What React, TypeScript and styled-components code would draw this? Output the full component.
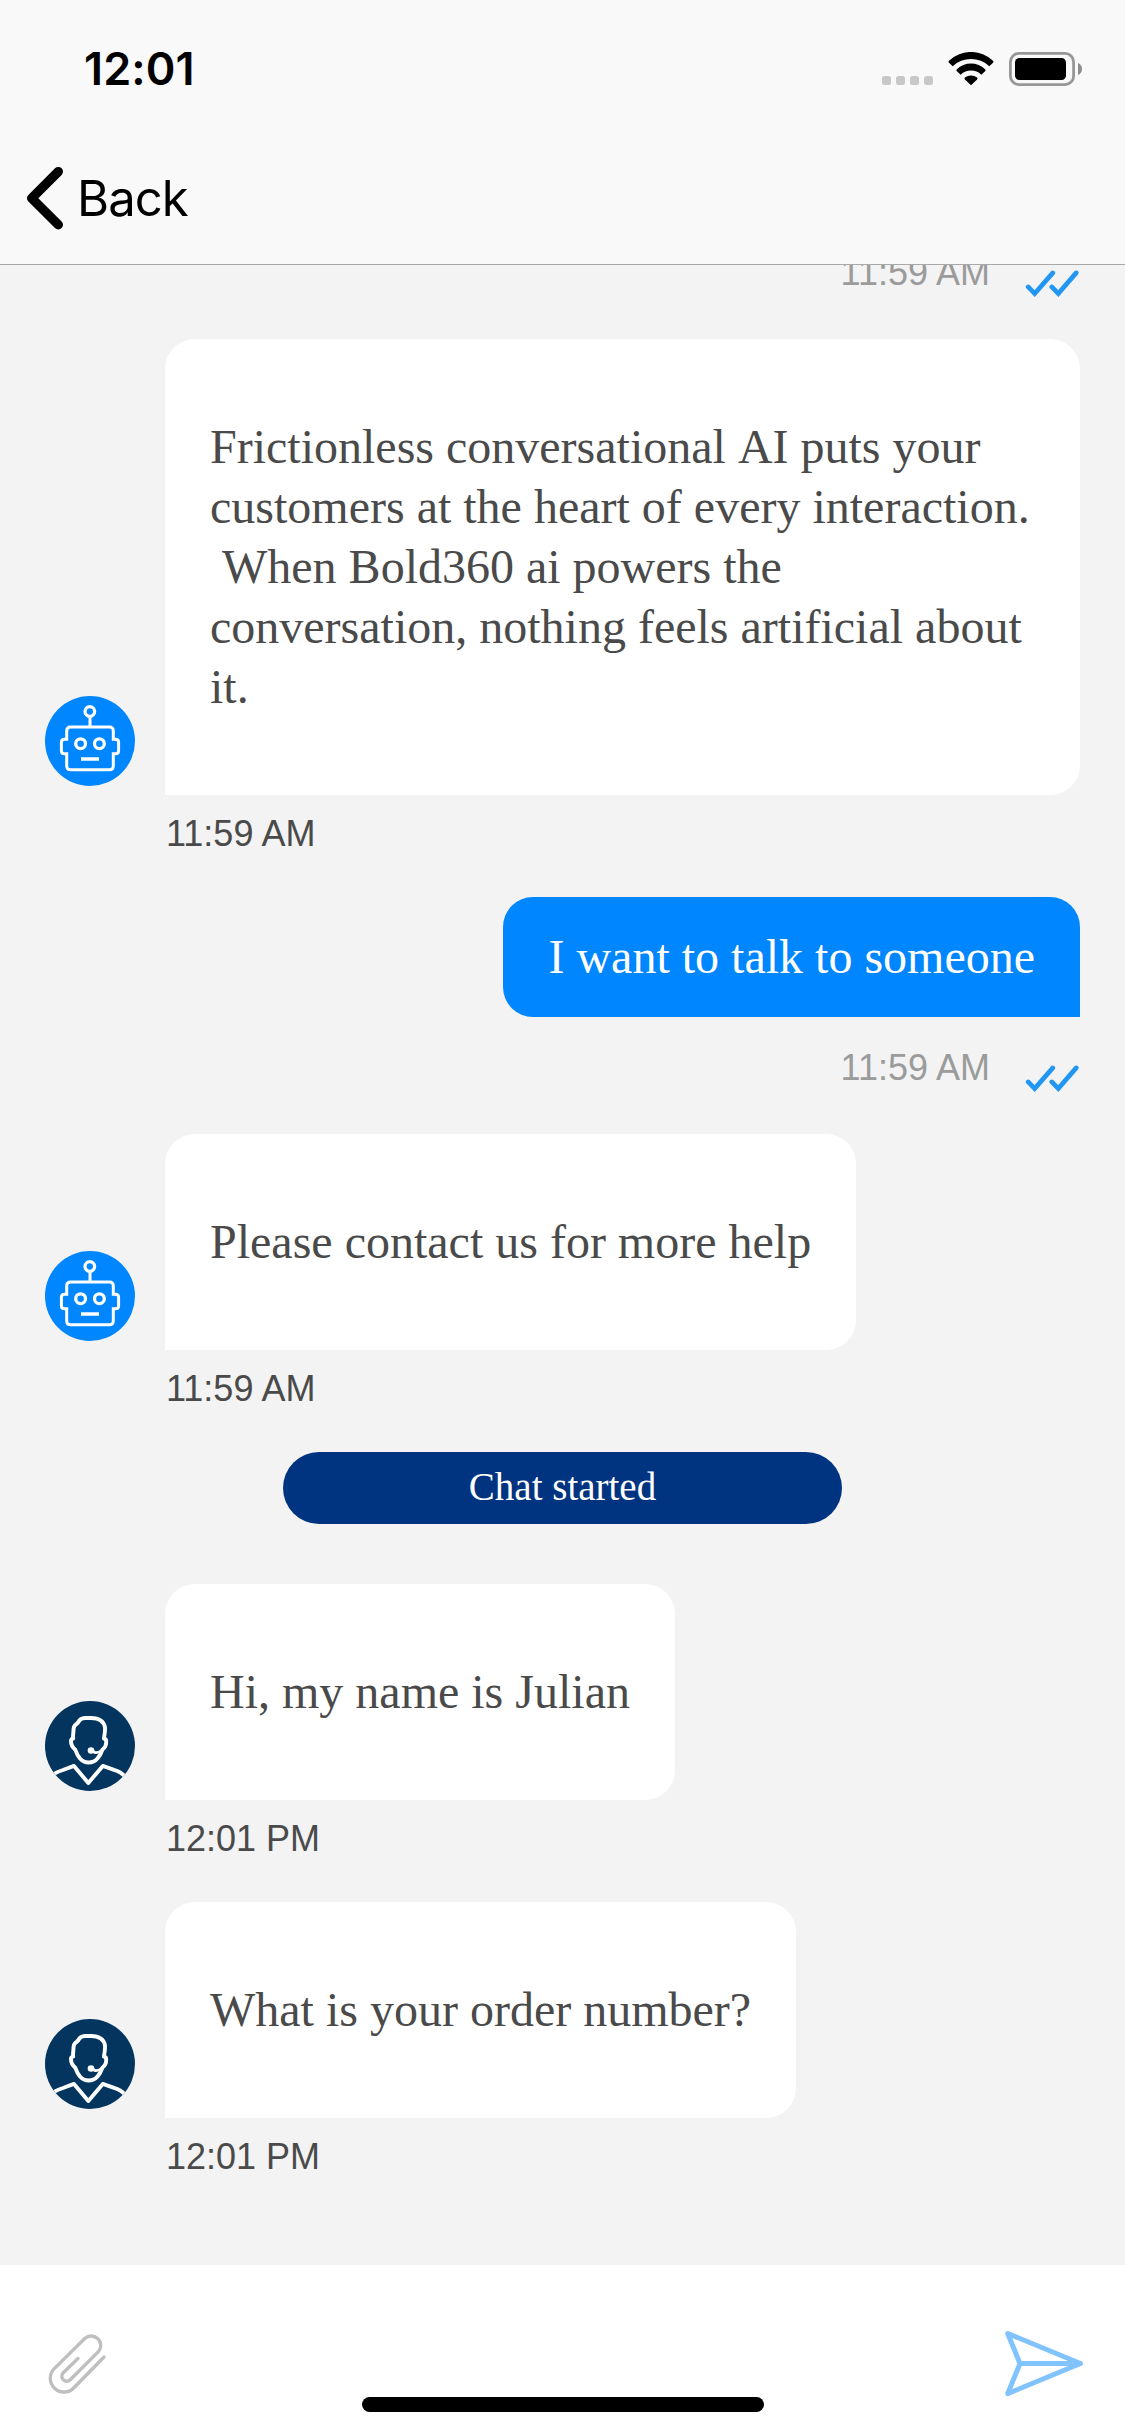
import React from "react";
import styled, { createGlobalStyle } from "styled-components";

const GlobalStyle = createGlobalStyle`
  * { box-sizing: border-box; }
  body { margin: 0; background: #fff; }
`;

const Screen = styled.div`
  width: 1125px;
  height: 2436px;
  display: flex;
  flex-direction: column;
  overflow: hidden;
`;

const Header = styled.header`
  height: 265px;
  flex: none;
  display: flex;
  flex-direction: column;
  background: #f9f9f9;
  border-bottom: 1px solid #a9a9a9;
  font-family: Inter, "Liberation Sans", sans-serif;
  color: #000;
`;

const StatusBar = styled.div`
  height: 132px;
  padding: 0 42px 0 84px;
  display: flex;
  justify-content: space-between;
`;

const Clock = styled.span`
  padding-top: 41px;
  font-size: 45px;
  line-height: 56px;
  font-weight: 600;
  letter-spacing: 0.1px;
`;

const StatusIcons = styled.div`
  display: flex;
  align-items: flex-start;
  padding-top: 52px;
  gap: 15px;
`;

const SignalDots = styled.div`
  display: flex;
  gap: 5px;
  padding-top: 24px;
`;

const Dot = styled.i`
  width: 9px;
  height: 9px;
  border-radius: 2.5px;
  background: #c8c8c8;
`;

const BackButton = styled.button`
  height: 132px;
  padding: 0 0 0 26px;
  border: 0;
  background: none;
  display: flex;
  align-items: center;
  gap: 13px;
  font: inherit;
  font-size: 49px;
  letter-spacing: -0.9px;
  color: inherit;
`;

const Messages = styled.main`
  height: 2000px;
  flex: none;
  padding: 0 45px 45px;
  display: flex;
  flex-direction: column;
  justify-content: flex-end;
  overflow: hidden;
  background: #f3f3f3;
  color: #4a4a4a;
  font-family: "Liberation Serif", "Times New Roman", serif;
`;

const IncomingRow = styled.article`
  flex: none;
  display: grid;
  grid-template-columns: 90px auto;
  column-gap: 30px;
  justify-content: start;
`;

const OutgoingRow = styled.article`
  flex: none;
  display: flex;
  flex-direction: column;
  align-items: flex-end;
`;

const Avatar = styled.div<{ $color: string }>`
  width: 90px;
  height: 90px;
  margin-bottom: 9px;
  align-self: end;
  border-radius: 50%;
  overflow: hidden;
  background: ${(p) => p.$color};
`;

const Bubble = styled.div<{ $outgoing?: boolean }>`
  max-width: 915px;
  padding: ${(p) => (p.$outgoing ? "30px 45px" : "78px 45px")};
  border-radius: ${(p) => (p.$outgoing ? "30px 30px 0 30px" : "30px 30px 30px 0")};
  background: ${(p) => (p.$outgoing ? "#0086ff" : "#fff")};
  color: ${(p) => (p.$outgoing ? "#fff" : "inherit")};
  font-size: 48px;
  line-height: 60px;
  font-kerning: none;
`;

const Time = styled.time`
  font-family: "Liberation Sans", Arial, sans-serif;
  font-size: 36px;
  line-height: 42px;
`;

const IncomingTime = styled(Time)`
  grid-column: 2;
  height: 102px;
  padding: 18px 0 0 1px;
`;

const Receipt = styled.div`
  height: 117px;
  display: flex;
  align-items: flex-start;
  gap: 34px;
  padding-top: 30px;
  color: #9b9b9b;

  svg {
    margin-top: 18px;
  }
`;

const Notice = styled.div`
  flex: none;
  align-self: center;
  width: 559px;
  height: 72px;
  margin-bottom: 60px;
  border-radius: 36px;
  background: #003380;
  color: #fff;
  font-size: 39px;
  line-height: 70px;
  text-align: center;
`;

const Composer = styled.footer`
  height: 171px;
  flex: none;
  padding-top: 65px;
  display: flex;
  flex-direction: column;
  background: #fff;
`;

const ComposerRow = styled.div`
  height: 67px;
  padding: 0 40px 0 45px;
  display: flex;
  justify-content: space-between;

  svg {
    overflow: visible;
  }
`;

const HomeIndicator = styled.div`
  align-self: center;
  width: 402px;
  height: 15px;
  border-radius: 8px;
  background: #000;
`;

const WifiIcon = () => (
  <svg width="46" height="34" viewBox="0 0 46 34">
    <path d="M1 8.7A32 32 0 0 1 45 8.7Q46 9.7 45 10.7L41.3 14.2A26.6 26.6 0 0 0 4.7 14.2L1 10.7Q0 9.7 1 8.7Z" />
    <path d="M8.9 17.2A20.5 20.5 0 0 1 37.1 17.2Q38.2 18.2 37.1 19.2L33.3 22.7A15 15 0 0 0 12.7 22.7L8.9 19.2Q7.8 18.2 8.9 17.2Z" />
    <path d="M16.9 25.6A10.2 10.2 0 0 1 29.1 25.6Q30 26.5 29.1 27.4L23 33.3L16.9 27.4Q16 26.5 16.9 25.6Z" />
  </svg>
);

const BatteryIcon = () => (
  <svg width="74" height="34" viewBox="0 0 74 34">
    <rect x="1.4" y="1.4" width="63.2" height="31.2" rx="8.5" fill="none" stroke="#979797" strokeWidth="2.8" />
    <rect x="6" y="6" width="51" height="22" rx="4.5" />
    <path d="M69 11Q73 12.8 73 17Q73 21.2 69 23Z" fill="#8d8d8d" />
  </svg>
);

const ChevronIcon = () => (
  <svg width="38" height="64" viewBox="0 0 38 64">
    <path
      d="M32.3 5.6L5.7 32.2L32.3 58.8"
      fill="none"
      stroke="#000"
      strokeWidth="9.4"
      strokeLinecap="round"
      strokeLinejoin="round"
    />
  </svg>
);

const RobotIcon = () => (
  <svg width="90" height="90" viewBox="0 0 90 90" fill="none" stroke="#fff" strokeWidth="3">
    <circle cx="44.8" cy="15.5" r="4.8" strokeWidth="3.3" />
    <path d="M45 21V31" />
    <path d="M25.7 31H64.3Q68.3 31 68.3 35V43.2H70.5Q73.6 43.2 73.6 46.2V54.8Q73.6 57.8 70.5 57.8H68.3V69.7Q68.3 73.7 64.3 73.7H25.7Q21.7 73.7 21.7 69.7V57.8H19.5Q16.4 57.8 16.4 54.8V46.2Q16.4 43.2 19.5 43.2H21.7V35Q21.7 31 25.7 31Z" />
    <circle cx="35.6" cy="47.7" r="4.9" strokeWidth="3.3" />
    <circle cx="54.4" cy="47.7" r="4.9" strokeWidth="3.3" />
    <path d="M36 63H54" strokeWidth="3.4" />
  </svg>
);

const AgentIcon = () => (
  <svg
    width="90"
    height="90"
    viewBox="0 0 90 90"
    fill="none"
    stroke="#fff"
    strokeWidth="3.9"
    strokeLinejoin="round"
    strokeLinecap="round"
  >
    <path d="M28.2 37.5L28 35.5L28.6 28Q28.8 24.5 31.5 23L33.5 21Q35 17.3 40 17H46Q58.5 17.3 60 26.5Q60.3 30 58.9 37.5Q61.5 38 61.2 41Q61.2 46 57.5 48.5Q55.5 54 52.5 57.5Q49 61.5 43.7 61.5Q38.500 61.5 35 57.5Q32.2 54 30.3 48.8Q26 45 26 40.5Q25.7 37.6 28.2 37.5Z" />
    <path d="M46.5 49.5L50 51.5Q53.5 52 57.5 49" strokeWidth="2.8" />
    <circle cx="46" cy="49.5" r="3.3" fill="#fff" stroke="none" />
    <path d="M10 72.4Q13 70.5 18 69L29 64.9L43.3 82L57.8 64.9L69 68.8Q76 71 79 74.5" />
  </svg>
);

const DoubleCheckIcon = () => (
  <svg
    width="56"
    height="28"
    viewBox="0 0 56 28"
    fill="none"
    stroke="#2196f3"
    strokeWidth="4.7"
    strokeLinecap="round"
  >
    <path d="M4.2 16.9L10.7 23.6L28.8 2.9" />
    <path d="M27.8 16.9L34.3 23.6L52.2 2.9" />
  </svg>
);

const PaperclipIcon = () => (
  <svg
    width="65"
    height="67"
    viewBox="0 0 65 67"
    fill="none"
    stroke="#bfbfbf"
    strokeWidth="3.4"
    strokeLinecap="round"
  >
    <path d="M59 27L28.7 58A13.7 13.7 0 0 1 9.3 38.6L40 8.3A9.5 9.5 0 0 1 53.4 21.7L24.8 50.2A5 5 0 0 1 17.8 43.2L33 28.5" />
  </svg>
);

const SendIcon = () => (
  <svg
    width="80"
    height="67"
    viewBox="0 0 80 67"
    fill="none"
    stroke="#80c3ff"
    strokeWidth="5"
    strokeLinecap="round"
    strokeLinejoin="round"
  >
    <path d="M2.7 3.5L75.5 33.5L2.7 63.6L15 33.5ZM15 33.5H75.5" />
  </svg>
);

type Sender = "bot" | "agent";

const avatars: Record<Sender, { color: string; icon: React.ReactNode }> = {
  bot: { color: "#0086ff", icon: <RobotIcon /> },
  agent: { color: "#03355f", icon: <AgentIcon /> },
};

const Incoming = ({ from, time, text }: { from: Sender; time: string; text: string }) => (
  <IncomingRow>
    <Avatar $color={avatars[from].color}>{avatars[from].icon}</Avatar>
    <Bubble>{text}</Bubble>
    <IncomingTime>{time}</IncomingTime>
  </IncomingRow>
);

const Outgoing = ({ time, text }: { time: string; text?: string }) => (
  <OutgoingRow>
    {text && <Bubble $outgoing>{text}</Bubble>}
    <Receipt>
      <Time>{time}</Time>
      <DoubleCheckIcon />
    </Receipt>
  </OutgoingRow>
);

const intro =
  "Frictionless conversational AI puts your customers at the heart of every interaction. \u00a0When Bold360 ai powers the conversation, nothing feels artificial about it.";

export default function App() {
  return (
    <Screen>
      <GlobalStyle />
      <Header>
        <StatusBar>
          <Clock>12:01</Clock>
          <StatusIcons>
            <SignalDots>
              <Dot />
              <Dot />
              <Dot />
              <Dot />
            </SignalDots>
            <WifiIcon />
            <BatteryIcon />
          </StatusIcons>
        </StatusBar>
        <BackButton>
          <ChevronIcon />
          Back
        </BackButton>
      </Header>
      <Messages>
        <Outgoing time="11:59 AM" />
        <Incoming from="bot" time="11:59 AM" text={intro} />
        <Outgoing time="11:59 AM" text="I want to talk to someone" />
        <Incoming from="bot" time="11:59 AM" text="Please contact us for more help" />
        <Notice>Chat started</Notice>
        <Incoming from="agent" time="12:01 PM" text="Hi, my name is Julian" />
        <Incoming from="agent" time="12:01 PM" text="What is your order number?" />
      </Messages>
      <Composer>
        <ComposerRow>
          <PaperclipIcon />
          <SendIcon />
        </ComposerRow>
        <HomeIndicator />
      </Composer>
    </Screen>
  );
}
